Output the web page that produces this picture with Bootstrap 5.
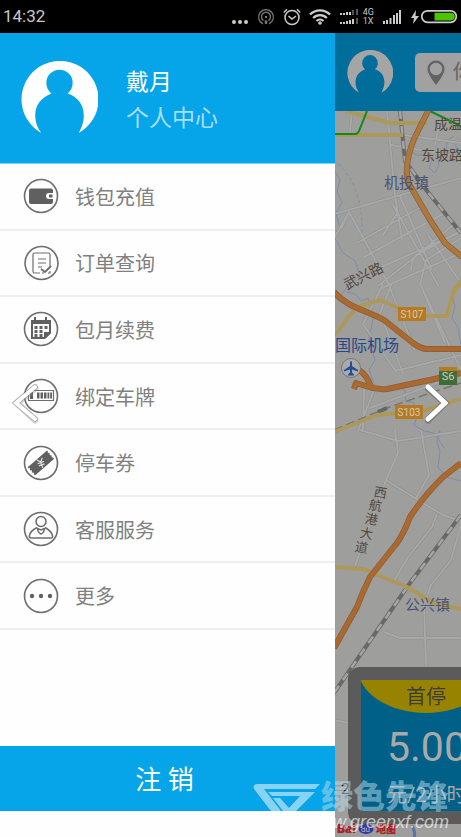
<!DOCTYPE html>
<html lang="zh-CN">
<head>
<meta charset="utf-8">
<meta name="viewport" content="width=device-width, initial-scale=1">
<title>个人中心</title>
<link href="https://cdn.jsdelivr.net/npm/bootstrap@5.3.0/dist/css/bootstrap.min.css" rel="stylesheet">
<style>
body{font-family:Roboto,"Noto Sans CJK SC",sans-serif;background:#fff}
svg{display:block;flex:none}
.status{height:33px;background:#000;color:#c8c8c8;padding:0 3px;font-size:17px}
.net{font-size:9px;line-height:9px}
.drawer{flex:0 0 335px;background:#fefefe}
.profile{height:131px;background:#06a4e8;padding:0 21px;gap:28px;border-bottom:1px solid #83d0f3}
.who{font-size:23px;line-height:36px;color:#fff;padding-top:6px}
.who a{color:#a6dff7}
.menu{height:466px}
.menu a{color:#808080;font-size:20px;line-height:30px;padding:0 23px;gap:16px;border-bottom:2px solid #efefef}
.menu span{padding-top:3px}
.logout{height:65px;margin-bottom:26px;background:#06a4e8;color:#fff;font-size:26px;padding:4px 6px 0 0}
.pane{background:#9e9e9d;min-width:0}
.topbar{height:78px;background:#006d9a;padding-left:12px;gap:22px}
.search{flex:0 0 220px;height:39px;background:#a1a1a1;border-radius:5px;padding-left:12px;gap:8px}
.search input{background:transparent;border:0;color:#626262;font-size:20px;width:150px;padding:0;outline:0}
.search input::placeholder{color:#626262;opacity:1}
.map{min-height:0}
.fare{left:13px;bottom:13px;width:180px;height:157px;background:#5b5b5b;border-radius:12px;padding:13px}
.fare-in{background:#006087;color:#a9a9a9}
.fare-cap{height:33px;background:#988300;color:#3d3d35;font-size:20px;line-height:35px;width:130px;clip-path:ellipse(68px 45px at 50% -12px)}
.price{font-size:41px;line-height:68px;padding-left:26px}
.unit{font-size:20px;line-height:28px;padding-left:26px}
.wait{left:6px;bottom:38px;font-size:15px;line-height:20px;color:#111}
.arrow{top:382px;width:28px;height:42px}
.mark-svg{right:0;bottom:0;pointer-events:none}
</style>
<script src="https://cdn.jsdelivr.net/npm/bootstrap@5.3.0/dist/js/bootstrap.bundle.min.js"></script>
</head>
<body>
<div class="min-vh-100 d-flex flex-column position-relative overflow-hidden">
<header class="status d-flex align-items-center justify-content-between">
 <span>14:32</span>
 <div class="d-flex align-items-center">
  <svg width="17" height="16" class="me-2" fill="#ccc"><circle cx="2" cy="13" r="2"/><circle cx="8" cy="13" r="2"/><circle cx="14" cy="13" r="2"/></svg>
  <svg width="18" height="18" class="me-2" fill="none" stroke="#777" stroke-width="1.3"><path d="M6 15.8a7.4 7.4 0 1 1 6 0M6.5 12.5a4.5 4.5 0 1 1 5 0"/><path d="M8 8h2v2H8zM7.5 12.5h3L10 16H8z" fill="#777" stroke="none"/></svg>
  <svg width="18" height="18" class="me-2" fill="none" stroke="#ccc" stroke-width="1.5"><circle cx="9" cy="9.5" r="7"/><path d="M5.5 8 9 11l4-3M.8 4.5 4 1.3M17.2 4.5 14 1.3"/></svg>
  <svg width="22" height="16" class="me-2" fill="none" stroke="#ccc" stroke-width="2.3"><path d="M1 5.500a14 14 0 0 1 20 0M4.200 9a9.500 9.500 0 0 1 13.600 0M7.500 12a5 5 0 0 1 7 0"/><circle cx="11" cy="14" r="1.800" fill="#ccc" stroke="none"/></svg>
  <svg width="20" height="16" class="me-1" fill="#ccc"><path d="M1 4h2v2H1zM4 4h2v2H4zM7 3h2v3H7zM10 3h2v3h-2zM1 13h2v2H1zM4 13h2v2H4zM7 12h2v3H7zM10 11h2v4h-2zM13 10h2v5h-2z"/><path fill="#555" d="M13 1h2v5h-2zM17 0h2v6h-2zM17 9h2v6h-2z"/></svg>
  <span class="net me-2">4G<br>1X</span>
  <svg width="20" height="16" class="me-2" fill="#ccc"><path d="M1 12h2v3H1zM4 11h2v4H4zM7.500 9h2v6h-2zM11 6h2v9h-2zM14 4h2v11h-2zM17 1h2v14h-2z"/></svg>
  <svg width="10" height="14" fill="#ccc"><path d="M6 0 1 8h3l-1 6 6-8H5.500z"/></svg>
  <svg width="38" height="15"><rect x="1.800" y="1.800" width="34.500" height="11.500" rx="5.700" fill="#000" stroke="#ccc" stroke-width="1.700"/><path d="M14.500 3.800H31a3.800 3.800 0 0 1 0 7.600H14.500z" fill="#4cc200"/></svg>
 </div>
</header>
<main class="d-flex flex-grow-1">
 <aside class="drawer d-flex flex-column">
  <div class="profile d-flex align-items-center">
   <svg width="77" height="74" viewBox="0 0 76 73"><path fill="#fff" d="M20 71A38 38 0 1 1 57 71Q62 62 62 54C62 42 55 35 46 32Q51 28 51 21.500A13 13 0 0 0 25 21.500Q25 28 30 32C20 36 14 43 14 54Q14 63 20 71Z"/></svg>
   <div class="who"><div>戴月</div><a class="text-decoration-none" href="#center">个人中心</a></div>
  </div>
  <nav class="menu d-flex flex-column">
   <a href="#wallet" class="d-flex align-items-center flex-fill text-decoration-none"><svg width="36" height="36" fill="none" stroke="#6d6d6d" stroke-width="1.600"><circle cx="18" cy="18" r="16.500"/><path fill="#606060" stroke="none" d="M8 10.500h20a2 2 0 0 1 2 2V15h-4a3 3 0 0 0 0 6h4v3a2 2 0 0 1-2 2H8a2 2 0 0 1-2-2V12.500a2 2 0 0 1 2-2z"/><path fill="#606060" stroke="none" d="M26 16.500h3.500v3H26z"/></svg><span>钱包充值</span></a>
   <a href="#orders" class="d-flex align-items-center flex-fill text-decoration-none"><svg width="36" height="36" fill="none" stroke="#6d6d6d" stroke-width="1.600"><circle cx="18.500" cy="18" r="16.500"/><path stroke-width="1.200" d="M27 21V9.500A1.500 1.500 0 0 0 25.500 8h-14A1.500 1.500 0 0 0 10 9.500v17a1.500 1.500 0 0 0 1.500 1.500H17M15 14h8M15 18h8M15 22h4M19 28h2M25 28h2v-2"/><path stroke-width="1.800" d="m18 24 4 3 6-6"/></svg><span>订单查询</span></a>
   <a href="#monthly" class="d-flex align-items-center flex-fill text-decoration-none"><svg width="36" height="36" fill="none" stroke="#6d6d6d" stroke-width="1.600"><circle cx="18" cy="18" r="16.500"/><path fill="#606060" stroke="none" fill-rule="evenodd" d="M8 9h3V6h2v3h9V6h2v3h4v13l-6 6H8zM10 13v13h11v-5h5v-8z"/><path stroke="#606060" stroke-width="3" stroke-dasharray="3 2" d="M11.500 16.500h13M11.500 20.500h9M11.500 24.500h9"/><path fill="#606060" stroke="none" d="M23 22h5l-5 5z"/></svg><span>包月续费</span></a>
   <a href="#plate" class="d-flex align-items-center flex-fill text-decoration-none"><svg width="36" height="36" fill="none" stroke="#6d6d6d" stroke-width="1.600"><circle cx="18" cy="18" r="16.500"/><path stroke-width="1.200" d="M5.500 12.500h25v10h-25z"/><path fill="#606060" stroke="none" d="M7 14h3v7H7zM14 14.500h2.500v6H14zM17.500 14.500H20v6h-2.500zM21 14.500h2.500v6H21zM24.500 14.500h1.800v6h-1.800zM27.200 14.500H29v6h-1.800z"/></svg><span>绑定车牌</span></a>
   <a href="#coupon" class="d-flex align-items-center flex-fill text-decoration-none"><svg width="36" height="36" fill="none" stroke="#6d6d6d" stroke-width="1.600"><circle cx="18" cy="18" r="16.500"/><g transform="rotate(-41 18 18)"><path fill="#606060" stroke="none" d="M6 12.500h24v11H6z"/><path stroke="#606060" stroke-dasharray="1.500 1.500" d="M6 12.500v11M30 12.500v11"/></g><path stroke="#ddd" stroke-width="1.200" d="m15 13.500 3 3.500 3-3.500M18 17v6M14.500 17.500h7M15 20h6" transform="rotate(-20 18 18)"/></svg><span>停车券</span></a>
   <a href="#service" class="d-flex align-items-center flex-fill text-decoration-none"><svg width="36" height="36" fill="none" stroke="#6d6d6d" stroke-width="1.600"><circle cx="18" cy="18" r="16.500"/><circle cx="18" cy="10.500" r="5"/><path d="M14 16.500Q7 20 6.300 25q0 2 2 2h19.500q2 0 1.800-2Q28.500 20 22 16.500M14.500 17.500q.5 4.500 3.500 5.500 3-1 3.500-5.500L18 19z"/></svg><span>客服服务</span></a>
   <a href="#more" class="d-flex align-items-center flex-fill text-decoration-none"><svg width="36" height="36" fill="none" stroke="#6d6d6d" stroke-width="1.600"><circle cx="18" cy="18" r="16.500"/><g fill="#606060" stroke="none"><circle cx="9" cy="18" r="2.200"/><circle cx="18" cy="18" r="2.200"/><circle cx="27" cy="18" r="2.200"/></g></svg><span>更多</span></a>
  </nav>
  <button type="button" class="logout border-0 mt-auto w-100">注 销</button>
 </aside>
 <section class="pane flex-grow-1 d-flex flex-column overflow-hidden">
  <div class="topbar d-flex align-items-center">
   <svg width="46" height="44" viewBox="0 0 76 73"><path fill="#a5a5a5" d="M20 71A38 38 0 1 1 57 71Q62 62 62 54C62 42 55 35 46 32Q51 28 51 21.500A13 13 0 0 0 25 21.500Q25 28 30 32C20 36 14 43 14 54Q14 63 20 71Z"/></svg>
   <label class="search d-flex align-items-center">
    <svg width="18" height="25" viewBox="0 0 18 25"><path fill="#626262" fill-rule="evenodd" d="M9 .5a8.500 8.500 0 0 1 8.500 8.500Q17.500 14 9 25 .5 14 .5 9A8.500 8.500 0 0 1 9 .5zm0 2.300a6.200 6.200 0 1 0 0 12.400A6.200 6.200 0 0 0 9 2.800z"/></svg>
    <input type="text" placeholder="你要去哪儿" aria-label="目的地">
   </label>
  </div>
  <div class="map position-relative flex-grow-1 overflow-hidden">
   <svg class="position-absolute top-0 start-0 w-100 h-100" viewBox="335 111 126 726" preserveAspectRatio="xMinYMin slice" fill="none" stroke-linejoin="round">
    <defs><path id="streets" d="M352 111l-2 20M387 111l8 85 7 43M391 145l70 12M404 135l57 8M440 120l-5 25M334 214 461 178M341 229l8-17 40 73 26 66M349 212l-17 30M357 243 421 207M364 257 443 214M372 271 461 232M382 288 461 253M400 196l32 74M393 205l46 82M383 235l15-23M378 286l38-30 42-35M411 270q0-15 14-20l36-19M420 285l6-25 35-22M428 235l33 48M420 283l25 60M392 283l-12 30 23 60M383 284l-20 40 32 46M395 371l66-16M423 290l38 80M363 430l1-40M370 408l91-34M358 431l18-46M360 430l38 11 63-10M395 430l3 23-12 27M421 430l8 45-13 23M386 480l32 20 25 15 18 6M386 480l-31 86M437 514l-5 13-24 30-14 24M461 525l-10 35-20 25-7 20 2 60M384 632l16 6 60 0M334 720l24 5"/></defs>
    <g stroke="#7f8ca9" stroke-width="1">
     <path d="M411 140q-2 18 12 15l10 3-4 10 6 5 4-8-2-10 8-3 3-12 6-4M455 140l2 12 4 5M334 170l6 10-3 12 5 10-6 11 4 15-5 10 8 15 12 8 5 14-12 10-7 11 4 8M347 292l8 2 6 7 7-3 5 20-4 22 6 20-6 10 6 16M397 385l8 6 1 10 8 2 4 12-4 10 10 6 10 2 10 15M440 430l-3 12 3 10-2 15 8 10 15 4M451 292l4 14-3 12 6 10 3 18"/>
     <path stroke-dasharray="3 3" d="M334 160q30 25 28 75l8 20"/>
    </g>
    <path stroke="#5a74a8" stroke-width="3" d="M412 826q4 6 2 12"/>
    <use href="#streets" stroke="#8f8f8f" stroke-width="3"/>
    <use href="#streets" stroke="#a8a8a8" stroke-width="2"/>
    <path stroke="#686868" stroke-width="4" d="M400 111l5 50 22 30 34 42M461 515l-51 68-45 65-31 45"/>
    <path stroke="#a5a5a5" stroke-width="2.500" stroke-dasharray="8 7" d="M400 111l5 50 22 30 34 42M461 515l-51 68-45 65-31 45"/>
    <path stroke="#777" stroke-width="1.500" stroke-dasharray="9 4" d="m334 430 53-22 43-15 31-10"/><path stroke="#666" stroke-width="4" d="m378 412 9-4"/>
    <path stroke="#ac995a" stroke-width="4" d="m346 111 44 12h37M334 135h69M334 335c10-8 15-25 29-30l17-5 18 8 27 8h22l6-23 8-10M334 432l43-17 46-4 38-12M334 567l29 2 44 18 26 16 28 6M453 291l8-10"/>
    <path stroke="#118a18" stroke-width="2" d="M334 134h21q3 0 4-3l8-20M430 111l31 15"/>
    <path stroke="#866038" stroke-width="6" d="M429 109l-15 30q-8 20-7 35 0 9 5 15l18 31 15 23 17 14"/>
    <path stroke="#ac783e" stroke-width="4.500" d="M429 109l-15 30q-8 20-7 35 0 9 5 15l18 31 15 23 17 14"/>
    <g id="highways"><path stroke="#8d5d31" stroke-width="6" d="M334 292c14 16 32 18 50 28l29 23q8 6 14 6h34M354 389l2-6 10 3q10 4 21 3l43-9 31-7M359 370q8 5 12 17M461 463l-18 14q-20 20-33 40-6 16-13 26l-27 34q-7 14-13 30l-23 41"/>
    <path stroke="#aa6931" stroke-width="4.500" d="M334 292c14 16 32 18 50 28l29 23q8 6 14 6h34M354 389l2-6 10 3q10 4 21 3l43-9 31-7M359 370q8 5 12 17M461 463l-18 14q-20 20-33 40-6 16-13 26l-27 34q-7 14-13 30l-23 41"/></g>
    <g font-size="14" fill="#51483d" font-family="Noto Sans CJK SC">
     <text x="434" y="129">成温</text><text x="421" y="160">东坡路</text><text transform="translate(347 290) rotate(-27)">武兴路</text>
     <g font-size="13"><text x="374" y="497" transform="rotate(10 380 492)">西</text><text x="369" y="510" transform="rotate(10 375 505)">航</text><text x="365" y="524" transform="rotate(10 372 519)">港</text><text x="360" y="538" transform="rotate(10 365 533)">大</text><text x="355" y="552" transform="rotate(10 361 547)">道</text></g>
     <g font-size="15" fill="#4c5470"><text x="384" y="188">机投镇</text><text x="405" y="610">公兴镇</text></g>
     <text x="335" y="351" font-size="16" fill="#254889">国际机场</text>
    </g>
    <g font-family="Roboto" font-size="10" fill="#d2c8b8" text-anchor="middle">
     <path fill="#b67b22" d="M398 307h28v14h-28zM395 405h28v14h-28z"/><path fill="#3f6d37" d="M439 368h18v17h-18z"/><path fill="#b67b22" d="M439 367h18v4h-18z"/>
     <text x="412" y="318">S107</text><text x="409" y="416">S103</text><text x="448" y="380" font-size="11">S6</text>
    </g>
    <circle cx="351" cy="368" r="9.500" fill="#aaa" stroke="#777"/><path fill="#264d91" d="M351 361q1 0 1 2v3l6 4v1.500l-6-2v3l2 2v1h-6v-1l2-2v-3l-6 2V370l6-4v-3q0-2 1-2z"/>
    <g font-family="Inter,Noto Sans CJK SC" font-weight="900" fill="#a62025"><text x="337" y="833" font-size="12">Bai</text><text x="376" y="833" font-size="10">地图</text></g>
    <g fill="#3536a5"><ellipse cx="366" cy="829" rx="7.500" ry="5"/><g fill="#55599d"><ellipse cx="363" cy="818" rx="2" ry="3"/><ellipse cx="370" cy="818" rx="2" ry="3"/></g><text x="361" y="832" font-size="8" font-family="Roboto" fill="#bbb">du</text></g>
   </svg>
   <div class="fare position-absolute"><div class="fare-in h-100"><div class="fare-cap text-center">首停</div><div class="price">5.00</div><div class="unit">元/2小时</div></div></div>
   <span class="wait position-absolute">2</span>
  </div>
 </section>
</main>
<button type="button" class="arrow btn p-0 border-0 position-absolute start-0 ms-2 ps-1" aria-label="上一张"><svg width="32" height="42" fill="none" stroke-linecap="round"><path stroke="#888" stroke-width="7" opacity=".35" d="M23 6 5 21l18 17"/><path stroke="#777" stroke-width="5.500" opacity=".5" d="M23 5 4 21l19 16"/><path stroke="#fff" stroke-width="4" d="M23 5 4 21l19 16"/></svg></button>
<button type="button" class="arrow btn p-0 border-0 position-absolute end-0 me-2 pe-1" aria-label="下一张"><svg width="28" height="42" fill="none" stroke-linecap="round"><path stroke="#444" stroke-width="7" opacity=".4" d="M3 6l17 15L3 38"/><path stroke="#fff" stroke-width="5" d="m3 5 17 16L3 37"/></svg></button>
<svg class="mark-svg position-absolute" width="211" height="57" viewBox="250 780 211 57" fill="#fff" fill-opacity=".52">
 <path d="M258 784h62l-5 5h-51l17 22h-10l-17-22q-2-5 4-5z"/><path d="M268 792h47l-19 19h-13l-10-13h7l9 10 11-12h-28z"/>
 <text x="321" y="808" font-family="Noto Sans CJK SC" font-size="32" font-weight="900" fill="#b9dded">绿色先锋</text>
 <text x="449" y="828" text-anchor="end" font-family="Liberation Sans" font-style="italic" font-size="18" fill-opacity=".65">www.greenxf.com</text>
</svg>
</div>
</body>
</html>
